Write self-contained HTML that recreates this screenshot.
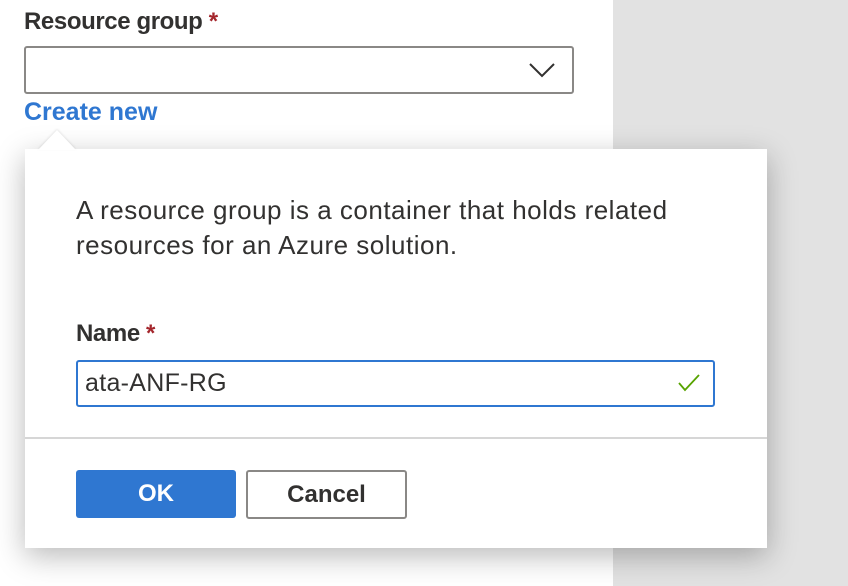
<!DOCTYPE html>
<html><head><style>
body{margin:0;width:848px;height:586px;overflow:hidden;background:#e2e2e2;font-family:"Liberation Sans",sans-serif;color:#323130;position:relative}
.panel{position:absolute;left:0;top:0;width:613px;height:586px;background:#fff}
.abs{position:absolute;white-space:nowrap}
.lbl{font-size:24px;font-weight:bold;letter-spacing:-0.4px}
.req{color:#a4262c}
.pop{position:absolute;left:25px;top:149px;width:742px;height:399px;background:#fff;box-shadow:0 8px 28px rgba(0,0,0,.28)}
.arrow{position:absolute;left:38px;top:130px;width:0;height:0;border-left:19px solid transparent;border-right:19px solid transparent;border-bottom:20px solid #fff;filter:drop-shadow(0 -1px 1px rgba(0,0,0,.1))}
</style></head><body>
<div class="panel"></div>
<div class="abs lbl" style="left:24px;top:8px">Resource group <span class="req">*</span></div>
<div class="abs" style="left:24px;top:46px;width:546px;height:44px;border:2px solid #8a8886;border-radius:3px"></div>
<svg class="abs" style="left:527px;top:60px" width="30" height="20"><path d="M3 4 L15 16 L27 4" fill="none" stroke="#323130" stroke-width="2"/></svg>
<div class="abs" style="left:24px;top:98px;font-size:25px;font-weight:bold;color:#2f77d1;letter-spacing:0">Create new</div>
<div class="pop">
 <div class="abs" style="left:51px;top:44px;font-size:26px;line-height:35px;letter-spacing:0.5px">A resource group is a container that holds related<br>resources for an Azure solution.</div>
 <div class="abs lbl" style="left:51px;top:171px">Name <span class="req">*</span></div>
 <div class="abs" style="left:51px;top:211px;width:635px;height:43px;border:2px solid #2f77d1;border-radius:3px"></div>
 <div class="abs" style="left:60px;top:220px;font-size:25px;letter-spacing:0.3px">ata-ANF-RG</div>
 <svg class="abs" style="left:652px;top:224px" width="24" height="20"><path d="M2 10 L8 17 L22 2" fill="none" stroke="#57a300" stroke-width="1.8"/></svg>
 <div class="abs" style="left:0;top:288px;width:742px;height:2px;background:#d6d6d6"></div>
 <div class="abs" style="left:51px;top:321px;width:160px;height:48px;background:#2f77d1;border-radius:3px;color:#fff;font-size:24px;font-weight:bold;text-align:center;line-height:48px">OK</div>
 <div class="abs" style="left:221px;top:321px;width:157px;height:45px;border:2px solid #8a8886;border-radius:3px;font-size:24px;font-weight:bold;text-align:center;line-height:45px">Cancel</div>
</div>
<div class="arrow"></div>
</body></html>
